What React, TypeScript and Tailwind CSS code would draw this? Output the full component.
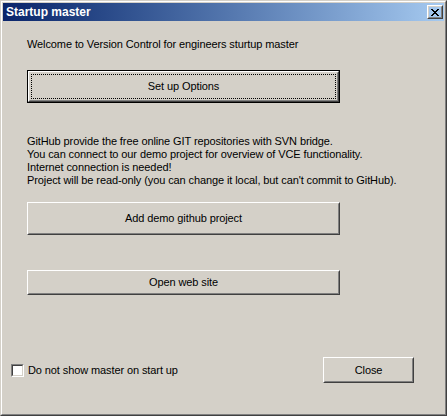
import type { ReactNode } from "react";

const font = "font-['Liberation_Sans',Arial,sans-serif]";

function Bevel({ children, className = "" }: { children: ReactNode; className?: string }) {
  return (
    <div className={`border border-t-white border-l-white border-b-[#404040] border-r-[#404040] ${className}`}>
      <div className="h-full border border-t-[#d4d0c8] border-l-[#d4d0c8] border-b-[#808080] border-r-[#808080] flex items-center justify-center">
        {children}
      </div>
    </div>
  );
}

function Button({ label, className = "" }: { label: string; className?: string }) {
  return (
    <Bevel className={className}>
      <span className="text-black">{label}</span>
    </Bevel>
  );
}

function DefaultButton({ label, className = "" }: { label: string; className?: string }) {
  return (
    <div className={`border border-black ${className}`}>
      <Bevel className="h-full">
        <div className="w-full h-full p-px">
          <div className="w-full h-full border border-dotted border-black flex items-center justify-center">
            {label}
          </div>
        </div>
      </Bevel>
    </div>
  );
}

function CloseGlyph() {
  return (
    <svg width="8" height="7" viewBox="0 0 8 7" shapeRendering="crispEdges">
      <path
        d="M0 0h2v1h1v1h2V1h1V0h2v1H7v1H6v1H5v1h1v1h1v1h1v1H6V6H5V5H3v1H2v1H0V6h1V5h1V4h1V3H2V2H1V1H0z"
        fill="#000"
      />
    </svg>
  );
}

export default function App() {
  return (
    <div className={`w-[447px] h-[416px] ${font} text-[11px] leading-[13px] tracking-[-0.1px] text-black`}>
      <div className="w-full h-full border border-t-[#d4d0c8] border-l-[#d4d0c8] border-b-[#404040] border-r-[#404040]">
        <div className="w-full h-full border border-t-white border-l-white border-b-[#808080] border-r-[#808080] bg-[#d4d0c8] p-px flex flex-col">
          {/* title bar */}
          <div className="h-[18px] shrink-0 bg-linear-to-r from-[#0a246a] to-[#a6caf0] flex items-center justify-between pl-[3px] pr-[1px]">
            <span className="text-white font-bold text-[12px] tracking-normal">Startup master</span>
            <Bevel className="w-[16px] h-[14px]">
              <CloseGlyph />
            </Bevel>
          </div>

          {/* body */}
          <div className="flex-1 flex flex-col">
            <p className="ml-[24px] mt-[17px]">Welcome to Version Control for engineers sturtup master</p>

            <DefaultButton label="Set up Options" className="ml-[24px] mt-[19px] w-[313px] h-[33px]" />

            <div className="ml-[24px] mt-[32px]">
              <p>GitHub provide the free online GIT repositories with SVN bridge.</p>
              <p>You can connect to our demo project for overview of VCE functionality.</p>
              <p>Internet connection is needed!</p>
              <p>Project will be read-only (you can change it local, but can't commit to GitHub).</p>
            </div>

            <Button label="Add demo github project" className="ml-[24px] mt-[15px] w-[313px] h-[33px]" />

            <Button label="Open web site" className="ml-[24px] mt-[35px] w-[313px] h-[25px]" />

            <div className="mt-[62px] flex items-center">
              <div className="ml-[8px] flex items-center gap-[4px] flex-1">
                <div className="w-[13px] h-[13px] border border-t-[#808080] border-l-[#808080] border-b-white border-r-white">
                  <div className="w-full h-full bg-white border border-t-[#404040] border-l-[#404040] border-b-[#d4d0c8] border-r-[#d4d0c8]" />
                </div>
                <span>Do not show master on start up</span>
              </div>
              <Button label="Close" className="w-[91px] h-[26px] mr-[30px]" />
            </div>
          </div>
        </div>
      </div>
    </div>
  );
}
